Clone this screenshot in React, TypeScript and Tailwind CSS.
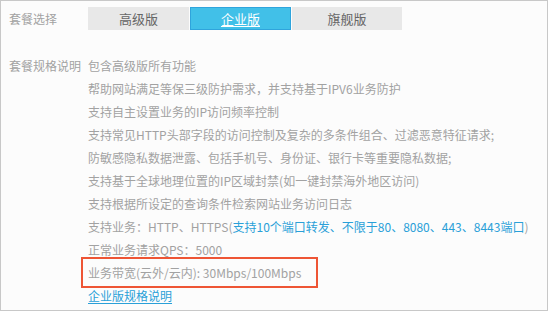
const font = {
  fontFamily: '"Microsoft YaHei", "Noto Sans CJK SC", "Noto Sans", sans-serif',
};

const specs = [
  "包含高级版所有功能",
  "帮助网站满足等保三级防护需求，并支持基于IPV6业务防护",
  "支持自主设置业务的IP访问频率控制",
  "支持常见HTTP头部字段的访问控制及复杂的多条件组合、过滤恶意特征请求;",
  "防敏感隐私数据泄露、包括手机号、身份证、银行卡等重要隐私数据;",
  "支持基于全球地理位置的IP区域封禁(如一键封禁海外地区访问)",
  "支持根据所设定的查询条件检索网站业务访问日志",
];

const tabs = [
  { name: "高级版", w: "w-[101px]" },
  { name: "企业版", w: "w-[101px]", active: true },
  { name: "旗舰版", w: "w-[110px]" },
];

export default function App() {
  return (
    <div
      className="w-[548px] h-[311px] border border-[#c8c8c8] bg-[#fcfcfc] text-[12px] text-[#a2a2a2] overflow-hidden"
      style={font}
    >
      {/* package tabs */}
      <div className="flex items-center pt-[6px]">
        <div className="w-[87px] pl-2 shrink-0">套餐选择</div>
        <div className="flex gap-px">
          {tabs.map((t) =>
            t.active ? (
              <div
                key={t.name}
                className={`${t.w} h-[23px] flex items-center justify-center bg-[#41c0e8] border border-[#2fa4dc] text-white text-[13px] underline underline-offset-2`}
              >
                {t.name}
              </div>
            ) : (
              <div
                key={t.name}
                className={`${t.w} h-[23px] flex items-center justify-center bg-[#e8e8e8] text-[#666] text-[13px]`}
              >
                {t.name}
              </div>
            )
          )}
        </div>
      </div>

      {/* spec list */}
      <div className="flex mt-[24px] leading-[23px]">
        <div className="w-[87px] pl-2 shrink-0">套餐规格说明</div>
        <div className="flex flex-col">
          {specs.map((s) => (
            <div key={s}>{s}</div>
          ))}
          <div>
            支持业务：HTTP、HTTPS(
            <span className="text-[#2aa0d8]">
              支持10个端口转发、不限于80、8080、443、8443端口
            </span>
            )
          </div>
          <div>正常业务请求QPS：5000</div>
          <div className="w-[237px] -ml-[7px] pl-[5px] -my-[4px] py-[2px] border-2 border-[#ee5535]">
            业务带宽(云外/云内): 30Mbps/100Mbps
          </div>
          <div className="text-[#2aa0d8] underline underline-offset-2">
            企业版规格说明
          </div>
        </div>
      </div>
    </div>
  );
}
